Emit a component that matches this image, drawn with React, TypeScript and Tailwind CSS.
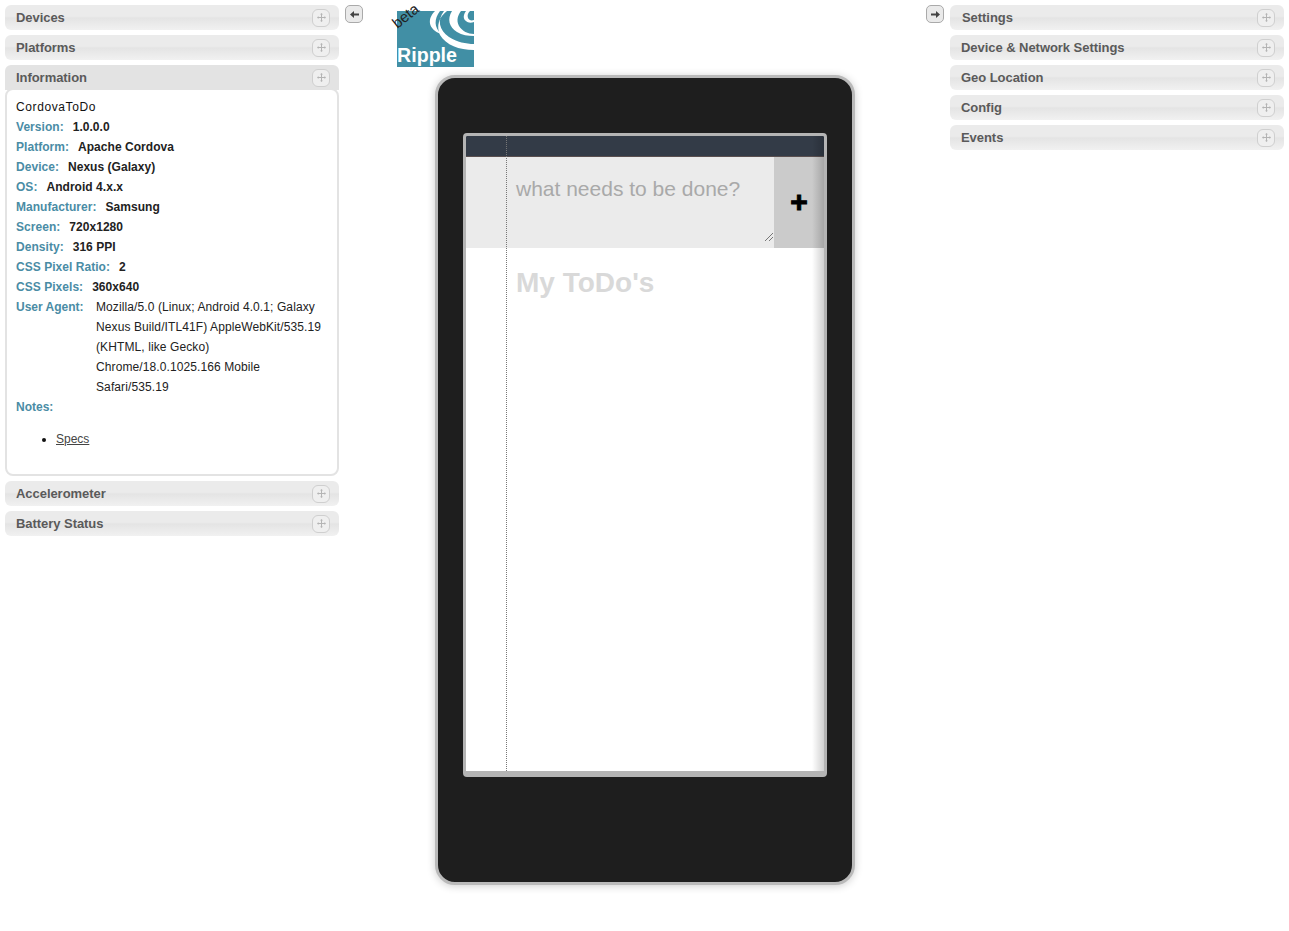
// App.tsx
import React from "react";

const font = { sans: "font-['Liberation_Sans',Arial,sans-serif]" };

const MoveIcon = () => (
  <svg width="9" height="9" viewBox="0 0 9 9" fill="#b4b4b4">
    <rect x="4" y="1" width="1" height="7" />
    <rect x="1" y="4" width="7" height="1" />
    <path d="M4.5 0L6 1.5H3zM4.5 9L6 7.5H3zM0 4.5L1.5 3v3zM9 4.5L7.5 3v3z" />
  </svg>
);

const PanelHeader = ({ title, active, pad = "pl-[11px]" }: { title: string; active?: boolean; pad?: string }) => (
  <div
    className={
      active
        ? "flex h-[25px] items-center justify-between rounded-t-[6px] bg-[#e3e3e3] pr-[9px] pl-[11px]"
        : `flex h-[25px] items-center justify-between rounded-[6px] bg-[linear-gradient(#ebebeb_0%,#ebebeb_45%,#e4e4e4_52%,#f1f1f1_100%)] pr-[9px] ${pad}`
    }
  >
    <span className="-mt-[1px] text-[13px] leading-none font-bold tracking-[-0.05px] text-[#5a5a5a]">{title}</span>
    <span className="flex h-[18px] w-[18px] items-center justify-center rounded-[6px] border border-[#cfcfcf] bg-[#efefef]">
      <MoveIcon />
    </span>
  </div>
);

const info = [
  ["Version:", "1.0.0.0"],
  ["Platform:", "Apache Cordova"],
  ["Device:", "Nexus (Galaxy)"],
  ["OS:", "Android 4.x.x"],
  ["Manufacturer:", "Samsung"],
  ["Screen:", "720x1280"],
  ["Density:", "316 PPI"],
  ["CSS Pixel Ratio:", "2"],
  ["CSS Pixels:", "360x640"],
];

const InfoBody = () => (
  <div className="relative -mt-[2px] h-[388px] rounded-[8px] border-2 border-[#e3e3e3] bg-white px-[9px] pt-[7px] text-[12px] leading-[20px] text-[#111]">
    <div className="tracking-[0.6px]">CordovaToDo</div>
    {info.map(([label, value]) => (
      <div key={label} className="flex gap-[9px] font-bold tracking-[0.04px]">
        <span className="text-[#4a8ca5]">{label}</span>
        <span className="text-[#222]">{value}</span>
      </div>
    ))}
    <div className="flex">
      <span className="w-[80px] shrink-0 font-bold text-[#4a8ca5]">User Agent:</span>
      <span className="tracking-[0.1px] text-[#222]">
        Mozilla/5.0 (Linux; Android 4.0.1; Galaxy Nexus Build/ITL41F) AppleWebKit/535.19 (KHTML, like Gecko)
        Chrome/18.0.1025.166 Mobile Safari/535.19
      </span>
    </div>
    <div className="font-bold text-[#4a8ca5]">Notes:</div>
    <ul className="mt-[12px] list-disc pl-[40px]">
      <li>
        <span className="text-[#444] underline">Specs</span>
      </li>
    </ul>
  </div>
);

const ArrowButton = ({ dir }: { dir: "left" | "right" }) => (
  <div className="flex h-[18px] w-[18px] items-center justify-center rounded-[5px] border border-[#aaa] bg-[#eaeaea]">
    <svg width="9" height="7" viewBox="0 0 9 7" fill="#444">
      {dir === "left" ? <path d="M0 3.5L4 0v2.5h5v2H4V7z" /> : <path d="M9 3.5L5 0v2.5H0v2h5V7z" />}
    </svg>
  </div>
);

const Logo = () => (
  <div className="relative ml-[34px] mt-[11px] h-[56px] w-[77px]">
    <svg width="77" height="56" viewBox="0 0 77 56">
      <rect width="77" height="56" fill="#418fa5" />
      <path d="M38 0C30 8 31 18 44 23 37 16 37 8 43 0z" fill="#fff" />
      <path d="M47 0C40 9 42 19 52 26 60 31 69 33 77 33v6C62 39 49 34 43 24 39 15 42 6 50 0z" fill="#fff" />
      <path d="M55 0C50 8 52 16 60 21 65 24 71 25 77 25v-2C71 23 65 20 62 15 59 9 61 4 64 0z" fill="#fff" />
      <path d="M69 0c-3 4-3 8 0 10 2 2 5 2 8 1V9c-3 1-5 0-6-2-1-3 0-5 2-7z" fill="#fff" />
      <text
        x="0"
        y="51"
        fontSize="21"
        fontWeight="700"
        fill="#fff"
        textLength="60"
        lengthAdjust="spacingAndGlyphs"
        fontFamily="'Liberation Sans',Arial,sans-serif"
      >
        Ripple
      </text>
    </svg>
    <span className="absolute top-[-4px] left-[-6px] -rotate-[38deg] text-[15px] leading-[18px] text-[#222]">beta</span>
  </div>
);

const Phone = () => (
  <div className="ml-[96px] h-[810px] w-[420px] rounded-[20px] border-[3px] border-[#bababa] bg-[#1e1e1e] pt-[55px] pl-[25px] shadow-[0_1px_8px_rgba(0,0,0,0.2)]">
    <div className="relative h-[644px] w-[364px] overflow-hidden rounded-[4px] border-x-[3px] border-t-[3px] border-b-[6px] border-[#b4b4b4] bg-white">
      <div className="h-[21px] border-b border-[#5a4f4f] bg-[#333b47]" />
      <div className="flex h-[91px]">
        <div className="relative flex-1 bg-[#ebebeb] pt-[20px] pl-[50px] text-[21px] leading-[24px] text-[#a9a9a9]">
          what needs to be done?
          <svg className="absolute right-[1px] bottom-[7px]" width="8" height="8" viewBox="0 0 8 8" stroke="#777" strokeWidth="1">
            <path d="M0 8L8 0M4 8l4-4" />
          </svg>
        </div>
        <div className="flex w-[50px] items-center justify-center bg-[#cbcbcb] pb-[2px] text-[30px] leading-none font-bold text-black [-webkit-text-stroke:1px_black]">
          +
        </div>
      </div>
      <div className="pt-[17px] pl-[50px] text-[28px] leading-[36px] font-bold text-[#d9d9d9]">My ToDo's</div>
      <div className="absolute top-0 bottom-0 left-[40px] border-l border-dotted border-[#777]" />
      <div className="absolute top-0 right-0 bottom-0 w-[12px] bg-[linear-gradient(to_right,rgba(0,0,0,0),rgba(0,0,0,0.18))]" />
    </div>
  </div>
);

export default function App() {
  return (
    <div className={`flex h-[931px] w-[1289px] overflow-hidden bg-white ${font.sans}`}>
      <aside className="flex w-[339px] shrink-0 flex-col gap-[5px] pt-[5px] pl-[5px]">
        <PanelHeader title="Devices" />
        <PanelHeader title="Platforms" />
        <div>
          <PanelHeader title="Information" active />
          <InfoBody />
        </div>
        <PanelHeader title="Accelerometer" />
        <PanelHeader title="Battery Status" />
      </aside>
      <main className="w-[611px] shrink-0">
        <div className="flex h-[75px] items-start">
          <div className="mt-[5px] ml-[6px]">
            <ArrowButton dir="left" />
          </div>
          <Logo />
          <div className="mt-[5px] ml-auto mr-[6px]">
            <ArrowButton dir="right" />
          </div>
        </div>
        <Phone />
      </main>
      <aside className="flex w-[334px] shrink-0 flex-col gap-[5px] pt-[5px]">
        <PanelHeader title="Settings" pad="pl-[12px]" />
        <PanelHeader title="Device & Network Settings" />
        <PanelHeader title="Geo Location" />
        <PanelHeader title="Config" />
        <PanelHeader title="Events" />
      </aside>
    </div>
  );
}
